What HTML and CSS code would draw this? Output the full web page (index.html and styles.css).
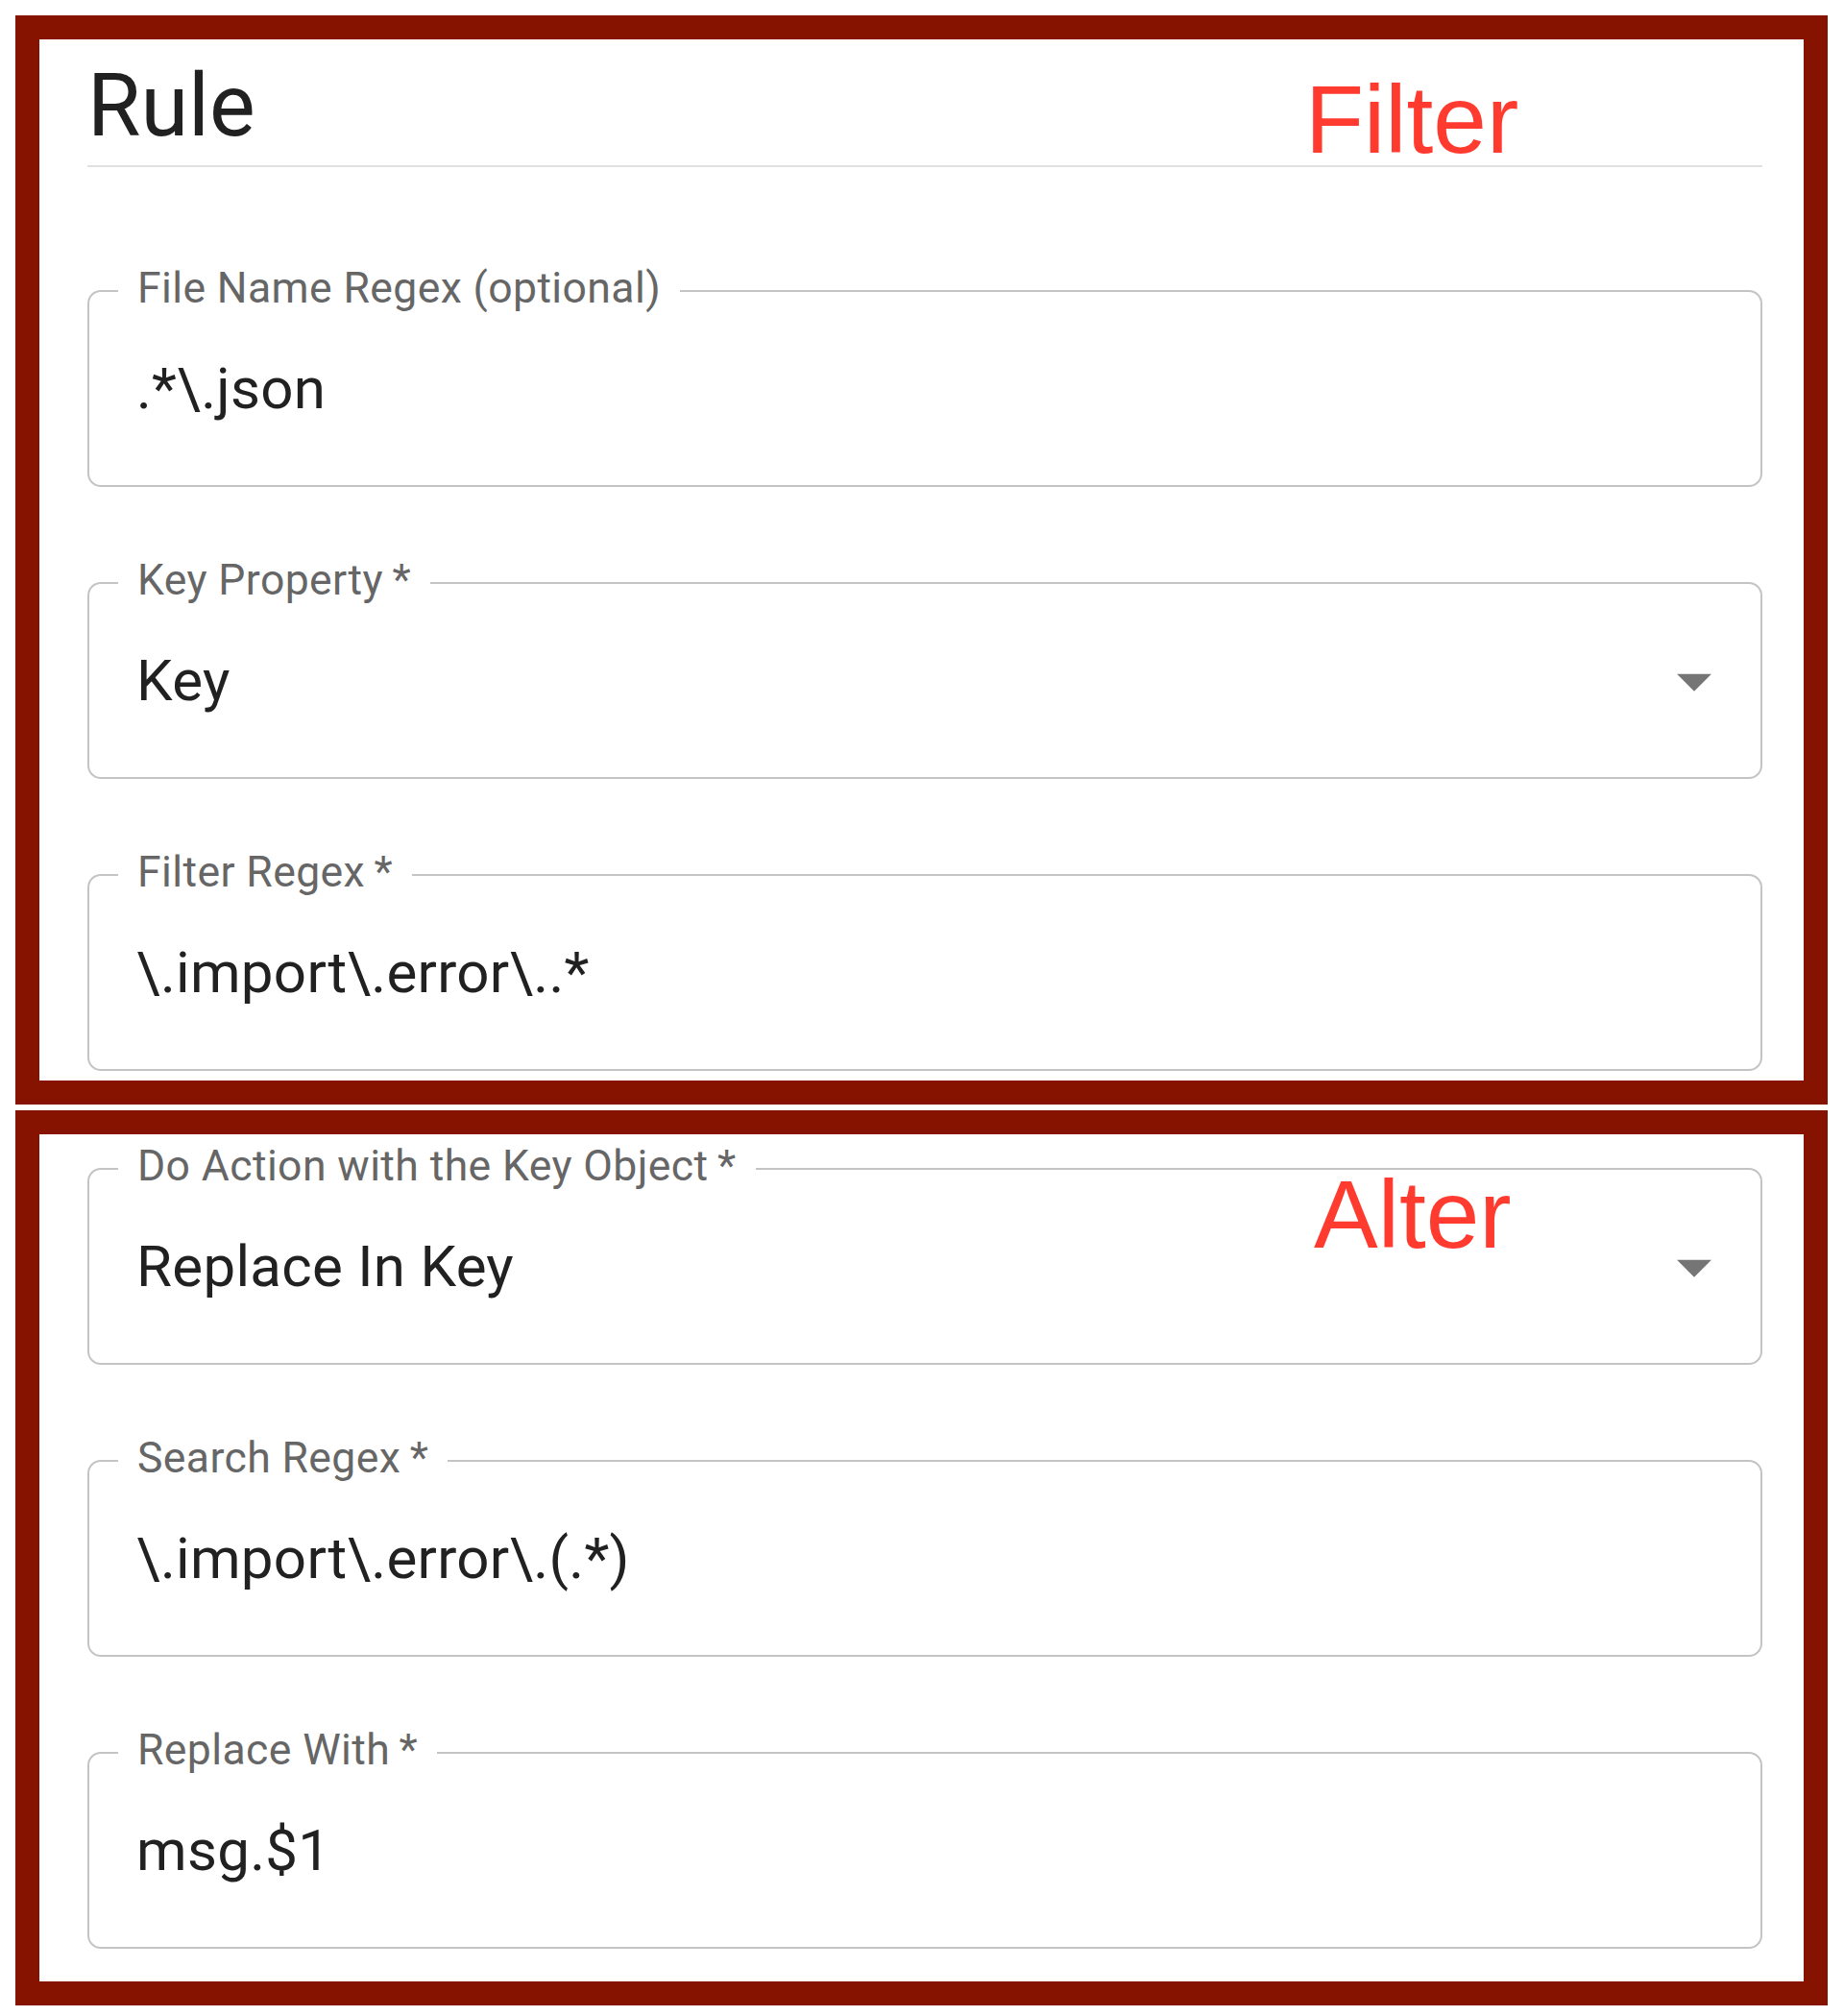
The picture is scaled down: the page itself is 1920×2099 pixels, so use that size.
FILE: index.html
```html
<!DOCTYPE html>
<html lang="en">
<head>
<meta charset="utf-8">
<title>Rule</title>
<link rel="stylesheet" href="styles.css">
</head>
<body>
<div class="page">
  <section class="frame frame-filter">
    <span class="tag tag-filter">Filter</span>
    <h1 class="title">Rule</h1>
    <hr class="divider">
    <fieldset class="field field-first">
      <legend>File Name Regex (optional)</legend>
      <div class="value">.*\.json</div>
    </fieldset>
    <fieldset class="field">
      <legend>Key Property&thinsp;*</legend>
      <div class="value select">
        <span>Key</span>
        <svg class="arrow" viewBox="0 0 24 24" width="86" height="86"><path d="M7 10l5 5 5-5z" fill="#757575"/></svg>
      </div>
    </fieldset>
    <fieldset class="field">
      <legend>Filter Regex&thinsp;*</legend>
      <div class="value">\.import\.error\..*</div>
    </fieldset>
  </section>
  <section class="frame frame-alter">
    <span class="tag tag-alter">Alter</span>
    <fieldset class="field field-top">
      <legend>Do Action with the Key Object&thinsp;*</legend>
      <div class="value select">
        <span>Replace In Key</span>
        <svg class="arrow" viewBox="0 0 24 24" width="86" height="86"><path d="M7 10l5 5 5-5z" fill="#757575"/></svg>
      </div>
    </fieldset>
    <fieldset class="field">
      <legend>Search Regex&thinsp;*</legend>
      <div class="value">\.import\.error\.(.*)</div>
    </fieldset>
    <fieldset class="field">
      <legend>Replace With&thinsp;*</legend>
      <div class="value">msg.$1</div>
    </fieldset>
  </section>
</div>
</body>
</html>
```

FILE: styles.css
```css
html, body {
  margin: 0;
  padding: 0;
  background: #ffffff;
}

body {
  font-family: Roboto, "Liberation Sans", Arial, sans-serif;
}

.page {
  display: flex;
  flex-direction: column;
  gap: 6px;
  padding: 16px 17px 11px 16px;
}

.frame {
  position: relative;
  border: 25px solid #851300;
  background: #ffffff;
}

.frame-filter {
  padding: 25px 43px 10px 50px;
}

.frame-alter {
  padding: 11px 43px 34px 50px;
}

.tag {
  position: absolute;
  top: 33px;
  font-family: "Liberation Sans", Arial, sans-serif;
  font-size: 100px;
  line-height: 100px;
  color: #ff3b30;
}

.tag-filter {
  left: 1318px;
}

.tag-alter {
  left: 1327px;
}

.title {
  margin: 0;
  font-size: 90px;
  line-height: 90px;
  font-weight: 400;
  color: #212121;
}

.divider {
  margin: 16px 0 0;
  border: 0;
  height: 2px;
  background: #e0e0e0;
}

.field {
  margin: 75px 0 0;
  padding: 0;
  min-width: 0;
  border: 2px solid #c4c4c4;
  border-radius: 14px;
}

.field-first {
  margin-top: 104px;
}

.field-top {
  margin-top: 0;
}

.field legend {
  margin-left: 30px;
  padding: 0 20px 6px;
  font-size: 44.5px;
  line-height: 44px;
  letter-spacing: 0.4px;
  color: #666666;
}

.value {
  box-sizing: border-box;
  height: 177px;
  padding: 0 49px 24px;
  display: flex;
  align-items: center;
  font-size: 60px;
  line-height: 1;
  letter-spacing: 0.3px;
  color: #212121;
  white-space: nowrap;
}

.value.select {
  justify-content: space-between;
  padding-right: 26px;
}

.arrow {
  display: block;
  flex: none;
}
```
